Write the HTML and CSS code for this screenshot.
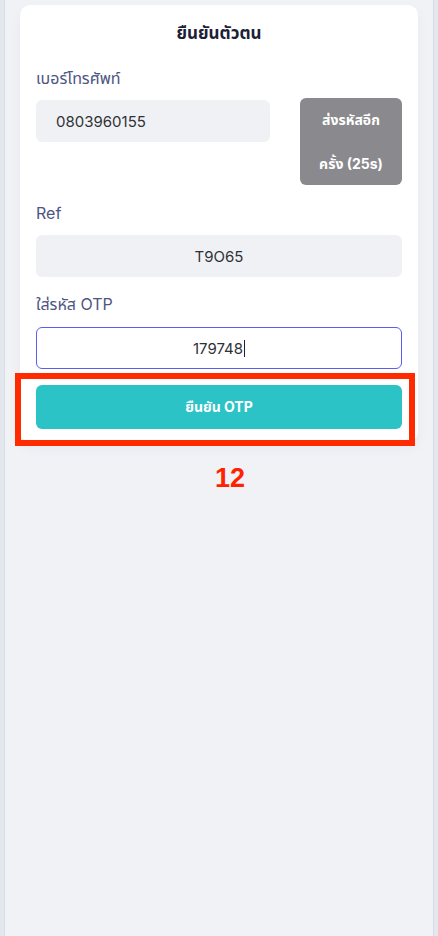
FILE: index.html
```html
<!DOCTYPE html>
<html lang="th">
<head>
<meta charset="utf-8">
<title>ยืนยันตัวตน</title>
<link rel="stylesheet" href="styles.css">
</head>
<body>
<div class="page">
  <div class="card">
    <h1 class="title">ยืนยันตัวตน</h1>
    <label class="label label-phone">เบอร์โทรศัพท์</label>
    <div class="phone-row">
      <div class="field field-phone">0803960155</div>
      <button class="resend">ส่งรหัสอีก<br>ครั้ง (25s)</button>
    </div>
    <label class="label label-ref">Ref</label>
    <div class="field field-center">T9O65</div>
    <label class="label label-otp">ใส่รหัส OTP</label>
    <div class="field field-center field-active"><span>179748</span><span class="caret"></span></div>
    <div class="highlight">
      <button class="confirm">ยืนยัน OTP</button>
    </div>
  </div>
  <div class="counter">12</div>
</div>
</body>
</html>
```
FILE: styles.css
```css
* { box-sizing: border-box; }
html, body { margin: 0; padding: 0; }
body {
  background: #e3e8ef;
  font-family: "Inter", "Noto Sans Thai", "Noto Sans", sans-serif;
  width: 438px;
  height: 936px;
  overflow: hidden;
}
.page {
  margin: 0 4px 0 4px;
  height: 936px;
  background: #f0f2f6;
  border-left: 1px solid #d9dee6;
  border-right: 1px solid #d9dee6;
  padding: 5px 15px 0 15px;
}
.card {
  background: #fff;
  border-radius: 10px;
  padding: 16px 16px 13px 16px;
  box-shadow: 0 6px 14px rgba(30, 40, 80, 0.04);
  display: flex;
  flex-direction: column;
}
.title {
  margin: 0;
  text-align: center;
  font-size: 17px;
  line-height: 24px;
  font-weight: 700;
  color: #1d1f38;
}
.label {
  display: block;
  font-size: 16px;
  line-height: 24px;
  color: #4e5583;
}
.label-phone { margin-top: 21px; }
.label-ref { margin-top: 16px; }
.label-otp { margin-top: 15px; }
.phone-row {
  margin-top: 8px;
  display: flex;
  align-items: flex-start;
  gap: 30px;
}
.field {
  height: 42px;
  border-radius: 6px;
  background: #f0f1f5;
  font-size: 15px;
  color: #2f3136;
  display: flex;
  align-items: center;
}
.field-phone {
  margin-top: 2px;
  width: 234px;
  padding-left: 20px;
}
.field-center {
  justify-content: center;
  margin-top: 10px;
}
.field-active {
  margin-top: 11px;
  background: #fff;
  border: 1px solid #5a5cf2;
}
.caret {
  display: inline-block;
  width: 1px;
  height: 17px;
  background: #222;
  margin-left: 1px;
}
.resend {
  width: 102px;
  height: 87px;
  border: none;
  border-radius: 6px;
  background: #8a898e;
  color: #fff;
  font-family: inherit;
  font-size: 14px;
  font-weight: 700;
  line-height: 44px;
  padding: 0;
}
.highlight {
  position: relative;
  margin-top: 16px;
}
.highlight::after {
  content: "";
  position: absolute;
  top: -12px;
  bottom: -17px;
  left: -21px;
  right: -13px;
  border: 6px solid #ff2a00;
  pointer-events: none;
}
.confirm {
  display: block;
  width: 100%;
  height: 44px;
  border: none;
  border-radius: 6px;
  background: #2bc3c6;
  color: #fff;
  font-family: inherit;
  font-size: 14px;
  font-weight: 700;
}
.counter {
  margin-top: 21px;
  text-align: center;
  padding-left: 22px;
  font-family: "Liberation Sans", Arial, sans-serif;
  font-weight: 700;
  font-size: 27px;
  line-height: 30px;
  color: #ff2200;
}
```
